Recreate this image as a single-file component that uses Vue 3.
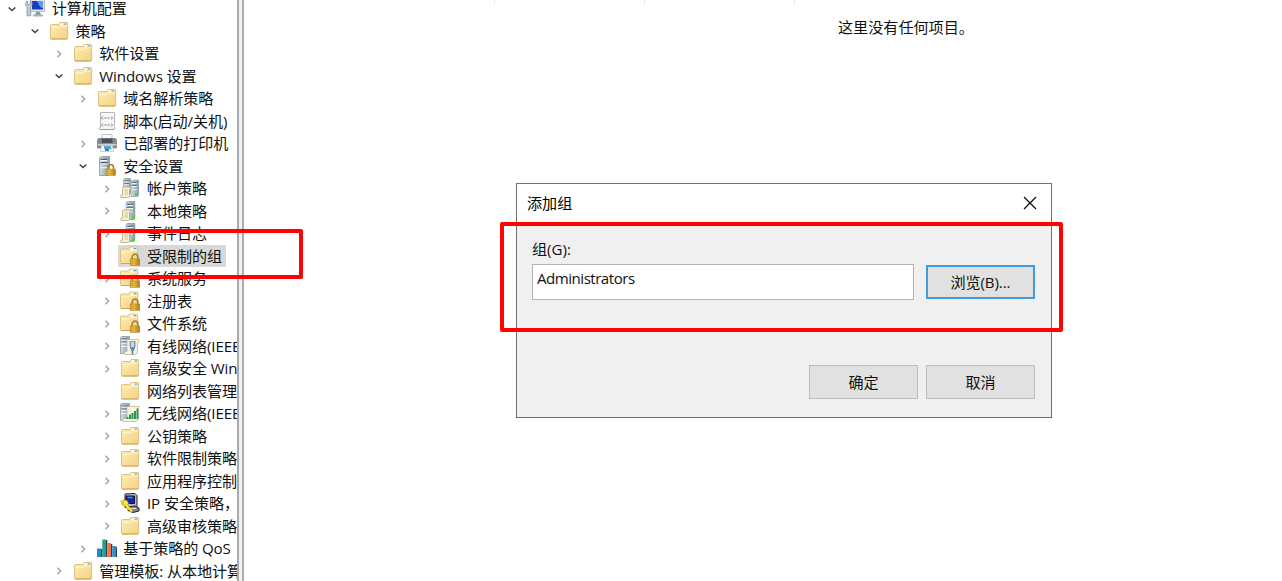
<script setup>
const rows = [
  [0, 'open', 'computer', '计算机配置'],
  [1, 'open', 'folder', '策略'],
  [2, 'closed', 'folder', '软件设置'],
  [2, 'open', 'folder', 'Windows 设置'],
  [3, 'closed', 'folder', '域名解析策略'],
  [3, '', 'script', '脚本(启动/关机)'],
  [3, 'closed', 'printer', '已部署的打印机'],
  [3, 'open', 'serverlock', '安全设置'],
  [4, 'closed', 'accounts', '帐户策略'],
  [4, 'closed', 'local', '本地策略'],
  [4, 'closed', 'local', '事件日志'],
  [4, '', 'folderlock', '受限制的组', true],
  [4, 'closed', 'folderlock', '系统服务'],
  [4, 'closed', 'folderlock', '注册表'],
  [4, 'closed', 'folderlock', '文件系统'],
  [4, 'closed', 'wired', '有线网络(IEEE'],
  [4, 'closed', 'folder', '高级安全 Win'],
  [4, '', 'folder', '网络列表管理'],
  [4, 'closed', 'wireless', '无线网络(IEEE'],
  [4, 'closed', 'folder', '公钥策略'],
  [4, 'closed', 'folder', '软件限制策略'],
  [4, 'closed', 'folder', '应用程序控制'],
  [4, 'closed', 'ipsec', 'IP 安全策略，'],
  [4, 'closed', 'folder', '高级审核策略'],
  [3, 'closed', 'qos', '基于策略的 QoS'],
  [2, 'closed', 'folder', '管理模板: 从本地计算'],
].map(([level, arrow, icon, label, selected]) => ({ level, arrow, icon, label, selected }))
</script>

<template>
  <div class="screen">
    <svg class="defs" aria-hidden="true">
      <defs>
        <linearGradient id="gf" x1="0" y1="0" x2="1" y2="1"><stop offset="0" stop-color="#ffedb5" /><stop offset="1" stop-color="#f2d283" /></linearGradient>
        <linearGradient id="gs" x1="0" y1="0" x2="1" y2="0"><stop offset="0" stop-color="#d3dde4" /><stop offset="1" stop-color="#8c9da8" /></linearGradient>
        <linearGradient id="gl" x1="0" y1="0" x2="1" y2="0"><stop offset="0" stop-color="#d9a52a" /><stop offset=".4" stop-color="#f0c64a" /><stop offset="1" stop-color="#a87408" /></linearGradient>
        <symbol id="folder" viewBox="0 0 20 20">
          <path d="M1.500 4.500Q1.500 3.500 2.500 3.500H9.500L11 1.500h7q.7 0 .7.700V17q0 1-1 1H2.500q-1 0-1-1z" fill="url(#gf)" stroke="#dcbc77" stroke-width=".9" />
          <path d="M11.500 2.200h6.200v2h-6.200z" fill="#fffbed" /><path d="M14.500 2.500h2.800v1.200h-2.800z" fill="#4fa5de" />
          <path d="M2 6.500h8.500L12 5h6" fill="none" stroke="#fff4cb" /><path d="M2 18h16.200" stroke="#cda553" />
        </symbol>
        <symbol id="lock" viewBox="0 0 11 13">
          <path d="M2.700 6V4a2.800 2.800 0 0 1 5.600 0v2" fill="none" stroke="#a98632" stroke-width="1.700" />
          <path d="M.7 6h9.600v6.300H.7z" fill="url(#gl)" stroke="#b5862a" stroke-width=".8" /><path d="M1 8.200h9M1 10.200h9" stroke="#c6902a" stroke-width=".6" />
        </symbol>
        <symbol id="server" viewBox="0 0 10 18" preserveAspectRatio="none">
          <path d="M.5 1.500 2 .5h7.500v16L8 17.500H.5z" fill="url(#gs)" stroke="#8999a3" stroke-width=".8" />
          <path d="M1.500 3h6M1.500 6h6" stroke="#4d5b65" /><path d="M1.500 4.200h6M1.500 7.200h6" stroke="#f6fafc" />
          <path d="M1 10.500h6.500" stroke="#edf3f6" />
        </symbol>
        <symbol id="scroll" viewBox="0 0 12 12">
          <path d="M3 1h7.500c1 1 .5 2-1 2v7.500c0 1-1 1-2 1H1C0 10 .5 9 2 9h.500V2.500C2.500 2 2.500 1 3 1z" fill="#f8f0d4" stroke="#b3a67c" stroke-width=".8" />
          <path d="M4.500 4h3.500M4.500 6h3.500M4.500 8h3.500" stroke="#cbb878" stroke-width=".8" />
        </symbol>
        <symbol id="folderlock" viewBox="0 0 20 20"><use href="#folder" x="-1" y="-.5" width="20" height="20" /><use href="#lock" x="9.500" y="7" width="11" height="13" /></symbol>
        <symbol id="serverlock" viewBox="0 0 20 20"><use href="#server" x="2" y="0" width="11" height="20" /><use href="#lock" x="8" y="7.500" width="11.500" height="12.500" /></symbol>
        <symbol id="accounts" viewBox="0 0 20 20"><use href="#server" x="3" y="0" width="8" height="17" /><use href="#server" x="10.500" y="1.500" width="8.500" height="17.500" /><path d="M15 15.500h3v2h-3z" fill="#48d51f" /><use href="#scroll" x="0" y="8" width="12" height="12" /></symbol>
        <symbol id="local" viewBox="0 0 20 20"><use href="#server" x="5.500" y="0" width="10" height="19" /><path d="M12 15.500h3V18h-3z" fill="#48d52b" /><use href="#scroll" x="0" y="8" width="12" height="12" /></symbol>
        <symbol id="script" viewBox="0 0 20 20">
          <path d="M3.500 1.500h14v14c0 2 .3 3-2 3h-13c-1.300-1-.5-2 1-2z" fill="#f7f7f7" stroke="#b1b4b8" /><path d="M3 18.500h13l1.500-1" fill="none" stroke="#999da1" />
          <path d="m6 5.500-1.500 1.500L6 8.500M14 5.500 15.500 7 14 8.500M7.500 7h2M10.500 7h2M6 12.500 4.500 14 6 15.500M14 12.500l1.500 1.500-1.500 1.500M7.500 14h2M10.500 14h2" fill="none" stroke="#666b71" stroke-width=".9" />
        </symbol>
        <symbol id="printer" viewBox="0 0 20 20">
          <path d="M5 6V1.500h10V6" fill="#fafafa" stroke="#c0c4c7" /><path d="M.3 7 1.500 5.500h17l1.200 1.500v8H.3z" fill="#858b90" stroke="#73797e" stroke-width=".7" />
          <path d="M4.500 5.500h11V10h-11z" fill="#4c5156" /><path d="M.7 11.700h18.600" stroke="#ced1d3" stroke-width="1.600" /><path d="M4.500 12.500h11l1 6h-13z" fill="#f6fbff" stroke="#b5c0c8" stroke-width=".7" />
          <path d="M7 13h7v3H7z" fill="#50acd5" /><path d="M8 15.500h4V18H8z" fill="#4778bb" /><path d="M13 14h1.500v3H13z" fill="#7bc391" />
        </symbol>
        <symbol id="computer" viewBox="0 0 20 20">
          <path d="M5.500 1.500h14v12h-14z" fill="#dfe5ec" stroke="#b4bdc8" /><path d="M7 3h11v8.500H7z" fill="#183dbf" /><path d="M12 3h6v7c-3 0-4-3-6-7z" fill="#5b9cf1" />
          <path d="M11 14h4l1 3h-6z" fill="#879bb1" /><path d="M8 17.500h10" stroke="#a4b3c1" stroke-width="2" />
          <path d="M.5 5.500C.5 4 1.500 3 2.500 3v3.500h2.700V3c1.200.3 2 1.300 2 2.700S6.300 8 5.700 8.500v9.300H2V8.500C1 8 .5 7 .5 5.500z" fill="#c4ced6" stroke="#8393a1" stroke-width=".8" />
        </symbol>
        <symbol id="wired" viewBox="0 0 20 20"><use href="#server" x="0" y="0" width="10" height="18" /><path d="M7 3.500h11.500c1 1 .5 3-1 3v9c0 2-1 3-3 3H5c-1-1-.5-3 1-3h1z" fill="#faf4df" stroke="#c0b597" stroke-width=".8" /><path d="M9.800 5v6M15.200 5v6" stroke="#a1b5c4" /><path d="M10.500 5.500h4V13h-4z" fill="#c0dbed" stroke="#668aab" stroke-width=".8" /><path d="M11 11h3v4h-3z" fill="#5f93c6" /><path d="M12.500 15v3.500" stroke="#5b83a6" stroke-width="1.500" /></symbol>
        <symbol id="wireless" viewBox="0 0 20 20"><use href="#server" x="0" y="0" width="10" height="18" /><path d="M7 3.500h12c.5 2-1 3-1 3v9c0 2-1 3-3 3H3c-1-1-.5-3 1-3h3z" fill="#faf4df" stroke="#c0b597" stroke-width=".8" /><path d="M6.500 16v-2h2v2zM9 16v-4.500h2V16zM11.500 16v-6h2v6zM14 16V8h2v8zM16.500 16V5.500h2V16z" fill="#2a9555" /></symbol>
        <symbol id="ipsec" viewBox="0 0 20 20"><path d="m5 1 10-.5 2 2v11l-3 1H5z" fill="#b6bac5" stroke="#20242c" /><path d="M6 3h8.500v7.500H6z" fill="#102a9d" stroke="#101329" /><path d="M7.500 4.500h5" stroke="#5d8fee" stroke-width="1.500" /><path d="m8 14 7-1 4 2v3l-6 1.500-5-2z" fill="#81858e" stroke="#22252c" /><path d="M10 15.500h6" stroke="#e2e2e2" /><path d="M.5 8.500 3 7l4 .5 1.500 3-1 1.500 5 5v2H10l-.5-2-2-.5L4.500 12H2L1.500 10H4z" fill="#ffe92e" stroke="#a8960d" stroke-width=".6" /></symbol>
        <symbol id="qos" viewBox="0 0 20 20"><path d="M4 11h1.300v8H4zM9 2h1.300v17H9zM14 6h1.300v13H14zM19 9h1v10h-1z" fill="#2e3d43" /><path d="M0 10.500h4V19H0z" fill="#248bcb" /><path d="M5.300 1.500H9V19H5.300z" fill="#21a28b" /><path d="M10.300 5H14v14h-3.700z" fill="#ee7653" /><path d="M15.300 8H19v11h-3.700z" fill="#2994d1" /></symbol>
      </defs>
    </svg>

    <nav class="tree">
      <div v-for="row in rows" :key="row.label" class="row" :class="'level' + row.level">
        <span class="arrow">
          <svg v-if="row.arrow" viewBox="0 0 10 10" :class="row.arrow"><path :d="row.arrow === 'open' ? 'M1.700 3.500 5 6.500l3.300-3' : 'm3.500 1.700 3.200 3.300-3.200 3.300'" /></svg>
        </span>
        <span class="item" :class="{ selected: row.selected }">
          <svg class="icon" viewBox="0 0 20 20"><use :href="'#' + row.icon" width="20" height="20" /></svg>
          <span class="label">{{ row.label }}</span>
        </span>
      </div>
    </nav>
    <div class="splitter"></div>
    <main class="content">
      <div class="columns"><i></i><i></i><i></i></div>
      <p class="empty">这里没有任何项目。</p>
    </main>

    <section class="dialog">
      <header class="title"><span>添加组</span><svg width="14" height="14" viewBox="0 0 14 14"><path d="m1 1 12 12M13 1 1 13" stroke="#000" stroke-width="1.100" /></svg></header>
      <div class="body">
        <label class="caption">组(G):</label>
        <div class="entry"><div class="field">Administrators</div><button class="browse">浏览(B)...</button></div>
        <footer class="actions"><button>确定</button><button>取消</button></footer>
      </div>
    </section>
    <div class="mark mark-tree"></div>
    <div class="mark mark-dialog"></div>
  </div>
</template>

<style>
html, body { margin: 0; overflow: hidden; }
</style>
<style scoped>
* { box-sizing: border-box; }
.screen { position: relative; display: flex; width: 1282px; height: 581px; overflow: hidden; background: #fff; color: #111; font: 15.100px/22px "Open Sans", "Noto Sans CJK SC", sans-serif; }
.defs { position: absolute; width: 0; height: 0; }
.tree { width: 237px; flex: none; overflow: hidden; margin-top: -3px; }
.row { display: flex; align-items: center; height: 22.500px; white-space: nowrap; }
.level1 { padding-left: 23.800px; }
.level2 { padding-left: 47.600px; }
.level3 { padding-left: 71.500px; }
.level4 { padding-left: 95.300px; }
.arrow { width: 23px; flex: none; display: flex; justify-content: center; padding-top: 1px; }
.arrow svg { width: 10px; height: 10px; fill: none; stroke: #a0a0a0; stroke-width: 1.300; }
.arrow svg.open { stroke: #404040; stroke-width: 1.500; }
.item { display: flex; align-items: center; height: 22px; padding: 0 4px 0 2px; }
.selected { background: #d9d9d9; }
.icon { width: 20px; height: 20px; flex: none; overflow: visible; }
.label { margin-left: 6.700px; letter-spacing: -.1px; }
.splitter { width: 7px; flex: none; background: #f0f0f2; border-left: 2px solid #a9abb1; border-right: 2px solid #aaacb2; }
.content { flex: 1; }
.columns { display: flex; height: 4px; padding-left: 250px; gap: 149px; }
.columns i { width: 1px; background: #e5e5e5; }
.empty { margin: 12px 0 0 594px; }
.dialog { position: absolute; left: 516px; top: 183px; width: 536px; height: 235px; display: flex; flex-direction: column; background: #f0f0f0; border: 1px solid #707070; }
.title { display: flex; align-items: center; justify-content: space-between; height: 39px; padding: 0 14px 2px 10px; background: #fff; color: #000; }
.body { flex: 1; padding: 15px 16px 18px 15px; display: flex; flex-direction: column; }
.caption { height: 26px; line-height: 22px; }
.entry { display: flex; justify-content: space-between; align-items: center; }
.field { width: 382px; height: 36px; padding: 2px 4px; background: #fff; border: 1px solid #b4b4b4; letter-spacing: -.5px; }
button { width: 109px; height: 34px; padding: 0; background: #e1e1e1; border: 1px solid #bdbdbd; color: #111; font: inherit; }
.browse { border: 2px solid #3f9be0; letter-spacing: -.1px; }
.actions { display: flex; justify-content: flex-end; gap: 8px; margin-top: auto; }
.mark { position: absolute; border: 4px solid #ff0202; border-radius: 2px; }
.mark-tree { left: 97px; top: 229px; width: 206px; height: 50px; }
.mark-dialog { left: 500px; top: 222px; width: 563px; height: 110px; }
</style>
